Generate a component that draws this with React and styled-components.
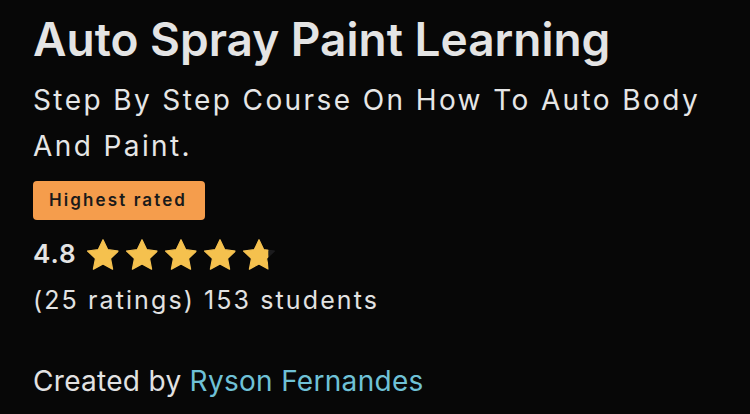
import styled, { createGlobalStyle } from "styled-components";

const GlobalStyle = createGlobalStyle`
  html, body {
    margin: 0;
    padding: 0;
    background: #070707;
  }
  body {
    font-family: Inter, "Noto Sans", sans-serif;
    color: #e6e6e6;
  }
`;

const Page = styled.div`
  width: 750px;
  height: 414px;
  box-sizing: border-box;
  padding: 11px 33px 0;
  display: flex;
  flex-direction: column;
`;

const Title = styled.h1`
  margin: 0;
  font-size: 46px;
  line-height: 56px;
  font-weight: 600;
  color: #e4e4e4;
`;

const Subtitle = styled.p`
  margin: 10px 0 0;
  font-size: 28px;
  line-height: 46px;
  font-weight: 400;
  letter-spacing: 2.4px;
  color: #e6e6e6;
`;

const Badge = styled.span`
  align-self: flex-start;
  margin-top: 12px;
  padding: 0 18px 0 16px;
  height: 39px;
  line-height: 39px;
  border-radius: 4px;
  background: #f59d4c;
  color: #1a1a1a;
  font-size: 17px;
  font-weight: 600;
  letter-spacing: 2.1px;
`;

const RatingRow = styled.div`
  display: flex;
  align-items: center;
  gap: 8px;
  height: 36px;
  margin-top: 16px;
`;

const Score = styled.span`
  font-size: 26px;
  line-height: 36px;
  font-weight: 600;
  letter-spacing: 1px;
  color: #e4e4e4;
`;

const Stars = styled.div`
  display: flex;
  gap: 3px;
`;

const Meta = styled.div`
  margin-top: 13px;
  font-size: 25px;
  line-height: 30px;
  letter-spacing: 2.1px;
  color: #e2e2e2;
`;

const Creator = styled.div`
  margin-top: 49px;
  font-size: 28px;
  line-height: 34px;
  letter-spacing: 0.3px;
  color: #e2e2e2;
`;

const Link = styled.a`
  color: #6fc1d6;
  text-decoration: none;
`;

const STAR = "M12 1.8l3.1 6.6 7.2.9-5.3 5 1.4 7.1L12 17.9l-6.4 3.5L7 14.3 1.7 9.3l7.2-.9z";

function Star({ fill = 1, id }) {
  return (
    <svg width="36" height="35" viewBox="0 0 24 23.3">
      <defs>
        <clipPath id={id}>
          <rect x="0" y="0" width={1.7 + 20.6 * fill} height="24" />
        </clipPath>
      </defs>
      <path d={STAR} fill="#1c1c1e" stroke="#1c1c1e" strokeWidth="0.8" strokeLinejoin="round" />
      <path
        d={STAR}
        fill="#f5c14e"
        stroke="#f5c14e"
        strokeWidth="0.8"
        strokeLinejoin="round"
        clipPath={`url(#${id})`}
      />
    </svg>
  );
}

export default function App() {
  const rating = 4.8;
  return (
    <>
      <GlobalStyle />
      <Page>
        <Title>Auto Spray Paint Learning</Title>
        <Subtitle>
          Step By Step Course On How To Auto Body
          <br />
          And Paint.
        </Subtitle>
        <Badge>Highest rated</Badge>
        <RatingRow>
          <Score>{rating}</Score>
          <Stars>
            {[0, 1, 2, 3, 4].map((i) => (
              <Star key={i} id={`s${i}`} fill={Math.max(0, Math.min(1, rating - i))} />
            ))}
          </Stars>
        </RatingRow>
        <Meta>(25 ratings) 153 students</Meta>
        <Creator>
          Created by <Link href="#">Ryson Fernandes</Link>
        </Creator>
      </Page>
    </>
  );
}
